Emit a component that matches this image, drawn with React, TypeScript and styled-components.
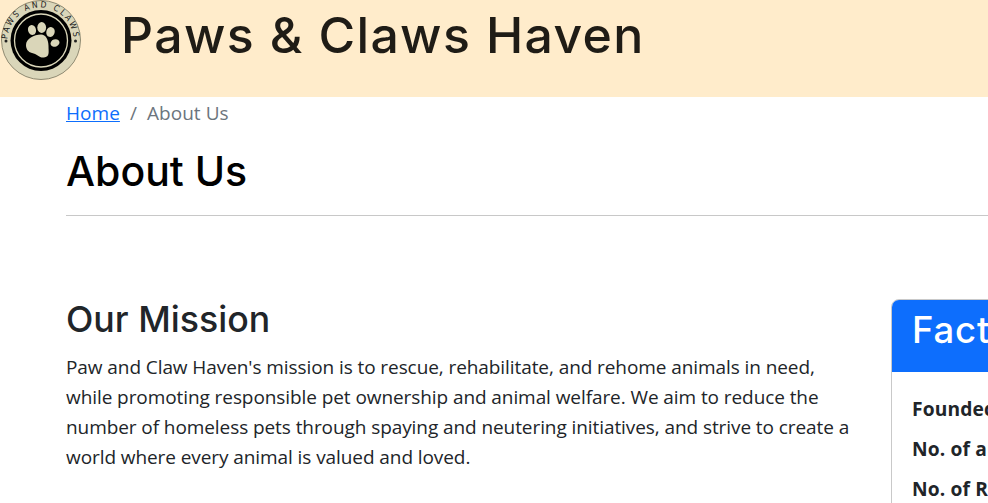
import React from "react";
import styled, { createGlobalStyle } from "styled-components";

const Global = createGlobalStyle`
  html, body { margin: 0; padding: 0; height: 503px; overflow: hidden; background: #fff; }
  body { font-family: "Open Sans", "Noto Sans", sans-serif; color: #212529; }
  #root { width: 1320px; }
`;

const Header = styled.header`
  display: flex;
  align-items: flex-start;
  height: 97px;
  background: #ffeccb;
`;
const LogoBox = styled.div`
  width: 82px;
  height: 82px;
  flex: none;
  display: flex;
`;
const SiteTitle = styled.h1`
  margin: 5px 0 0 39px;
  font: 500 50px/60px Inter, "Open Sans", sans-serif;
  letter-spacing: 1.35px;
  color: #1f1c16;
`;
const Main = styled.main`
  padding: 0 0 0 66px;
`;
const Crumbs = styled.nav`
  display: flex;
  align-items: center;
  height: 32px;
  font-size: 19px;
  letter-spacing: 0.05px;
  color: #6c757d;
`;
const CrumbLink = styled.a`
  color: #0d6efd;
  text-decoration: underline;
`;
const Sep = styled.span`
  padding: 0 10px;
`;
const PageTitle = styled.h1`
  margin: 18px 0 0;
  font: 500 41px/48px Inter, "Open Sans", sans-serif;
  color: #000;
`;
const Rule = styled.hr`
  margin: 20px 0 0;
  border: 0;
  border-top: 1px solid #c8c8c8;
`;
const Columns = styled.div`
  display: flex;
  align-items: flex-start;
  gap: 38px;
  margin-top: 83px;
`;
const Article = styled.section`
  width: 787px;
  flex: none;
`;
const SectionTitle = styled.h2`
  margin: 0;
  font: 500 35.7px/40px Inter, "Open Sans", sans-serif;
  color: #212529;
`;
const Body = styled.p`
  margin: 13px 0 0;
  font-size: 19px;
  line-height: 30px;
  letter-spacing: -0.08px;
  color: #212529;
`;
const Card = styled.aside`
  width: 360px;
  flex: none;
  border: 1px solid #c9c9c9;
  border-radius: 8px;
  overflow: hidden;
`;
const CardHead = styled.div`
  height: 72px;
  padding: 5px 20px 0;
  box-sizing: border-box;
  background: #0d6efd;
  color: #fff;
  font: 500 36.5px/50px Inter, "Open Sans", sans-serif;
  letter-spacing: 0.8px;
`;
const CardBody = styled.div`
  padding: 22px 20px;
  display: flex;
  flex-direction: column;
  gap: 10px;
`;
const Fact = styled.div`
  font-size: 19.2px;
  line-height: 30px;
  font-weight: 700;
  letter-spacing: 0.15px;
`;

const Logo = () => (
  <svg width="82" height="82" viewBox="0 0 82 82">
    <defs>
      <path id="arc" d="M7.5 40.5 A33 33 0 0 1 73.5 40.5" />
    </defs>
    <circle cx="41" cy="40" r="39.5" fill="#dad6b9" stroke="#8f8a72" strokeWidth="1" />
    <text fontFamily="'DejaVu Sans Condensed', 'Liberation Sans', sans-serif" fontSize="8.5" fill="#1a1a1a" letterSpacing="2.2">
      <textPath href="#arc" startOffset="50%" textAnchor="middle">PAWS AND CLAWS</textPath>
    </text>
    <circle cx="6" cy="41" r="1.5" fill="#222" />
    <circle cx="75.5" cy="41" r="1.5" fill="#222" />
    <circle cx="41" cy="40.5" r="30.5" fill="#000" />
    <circle cx="41" cy="40.5" r="26.5" fill="none" stroke="#dad6b9" strokeWidth="1.3" />
    <g fill="#dad6b9">
      <ellipse cx="32" cy="30" rx="4" ry="5" transform="rotate(-15 32 30)" />
      <ellipse cx="41.7" cy="27.5" rx="4.4" ry="5.4" />
      <ellipse cx="50.5" cy="32" rx="4.2" ry="5" transform="rotate(15 50.5 32)" />
      <ellipse cx="55" cy="43" rx="4.6" ry="3.6" transform="rotate(-20 55 43)" />
      <path d="M26 45 C26 39 34 34.5 41 34.5 C46 34.5 48.5 40 48.5 46 C48.5 52 50 57 44 57.5 C39 58 37 54 32 53 C28 52 26 49 26 45Z" />
    </g>
  </svg>
);

export default function App() {
  return (
    <>
      <Global />
      <Header>
        <LogoBox>
          <Logo />
        </LogoBox>
        <SiteTitle>Paws &amp; Claws Haven</SiteTitle>
      </Header>
      <Main>
        <Crumbs>
          <CrumbLink href="#">Home</CrumbLink>
          <Sep>/</Sep>
          <span>About Us</span>
        </Crumbs>
        <PageTitle>About Us</PageTitle>
        <Rule />
        <Columns>
          <Article>
            <SectionTitle>Our Mission</SectionTitle>
            <Body>
              Paw and Claw Haven's mission is to rescue, rehabilitate, and rehome animals in need,
              while promoting responsible pet ownership and animal welfare. We aim to reduce the
              number of homeless pets through spaying and neutering initiatives, and strive to
              create a world where every animal is valued and loved.
            </Body>
          </Article>
          <Card>
            <CardHead>Facts</CardHead>
            <CardBody>
              <Fact>Founded: 2010</Fact>
              <Fact>No. of animals: 500</Fact>
              <Fact>No. of Rehomed: 300</Fact>
            </CardBody>
          </Card>
        </Columns>
      </Main>
    </>
  );
}
